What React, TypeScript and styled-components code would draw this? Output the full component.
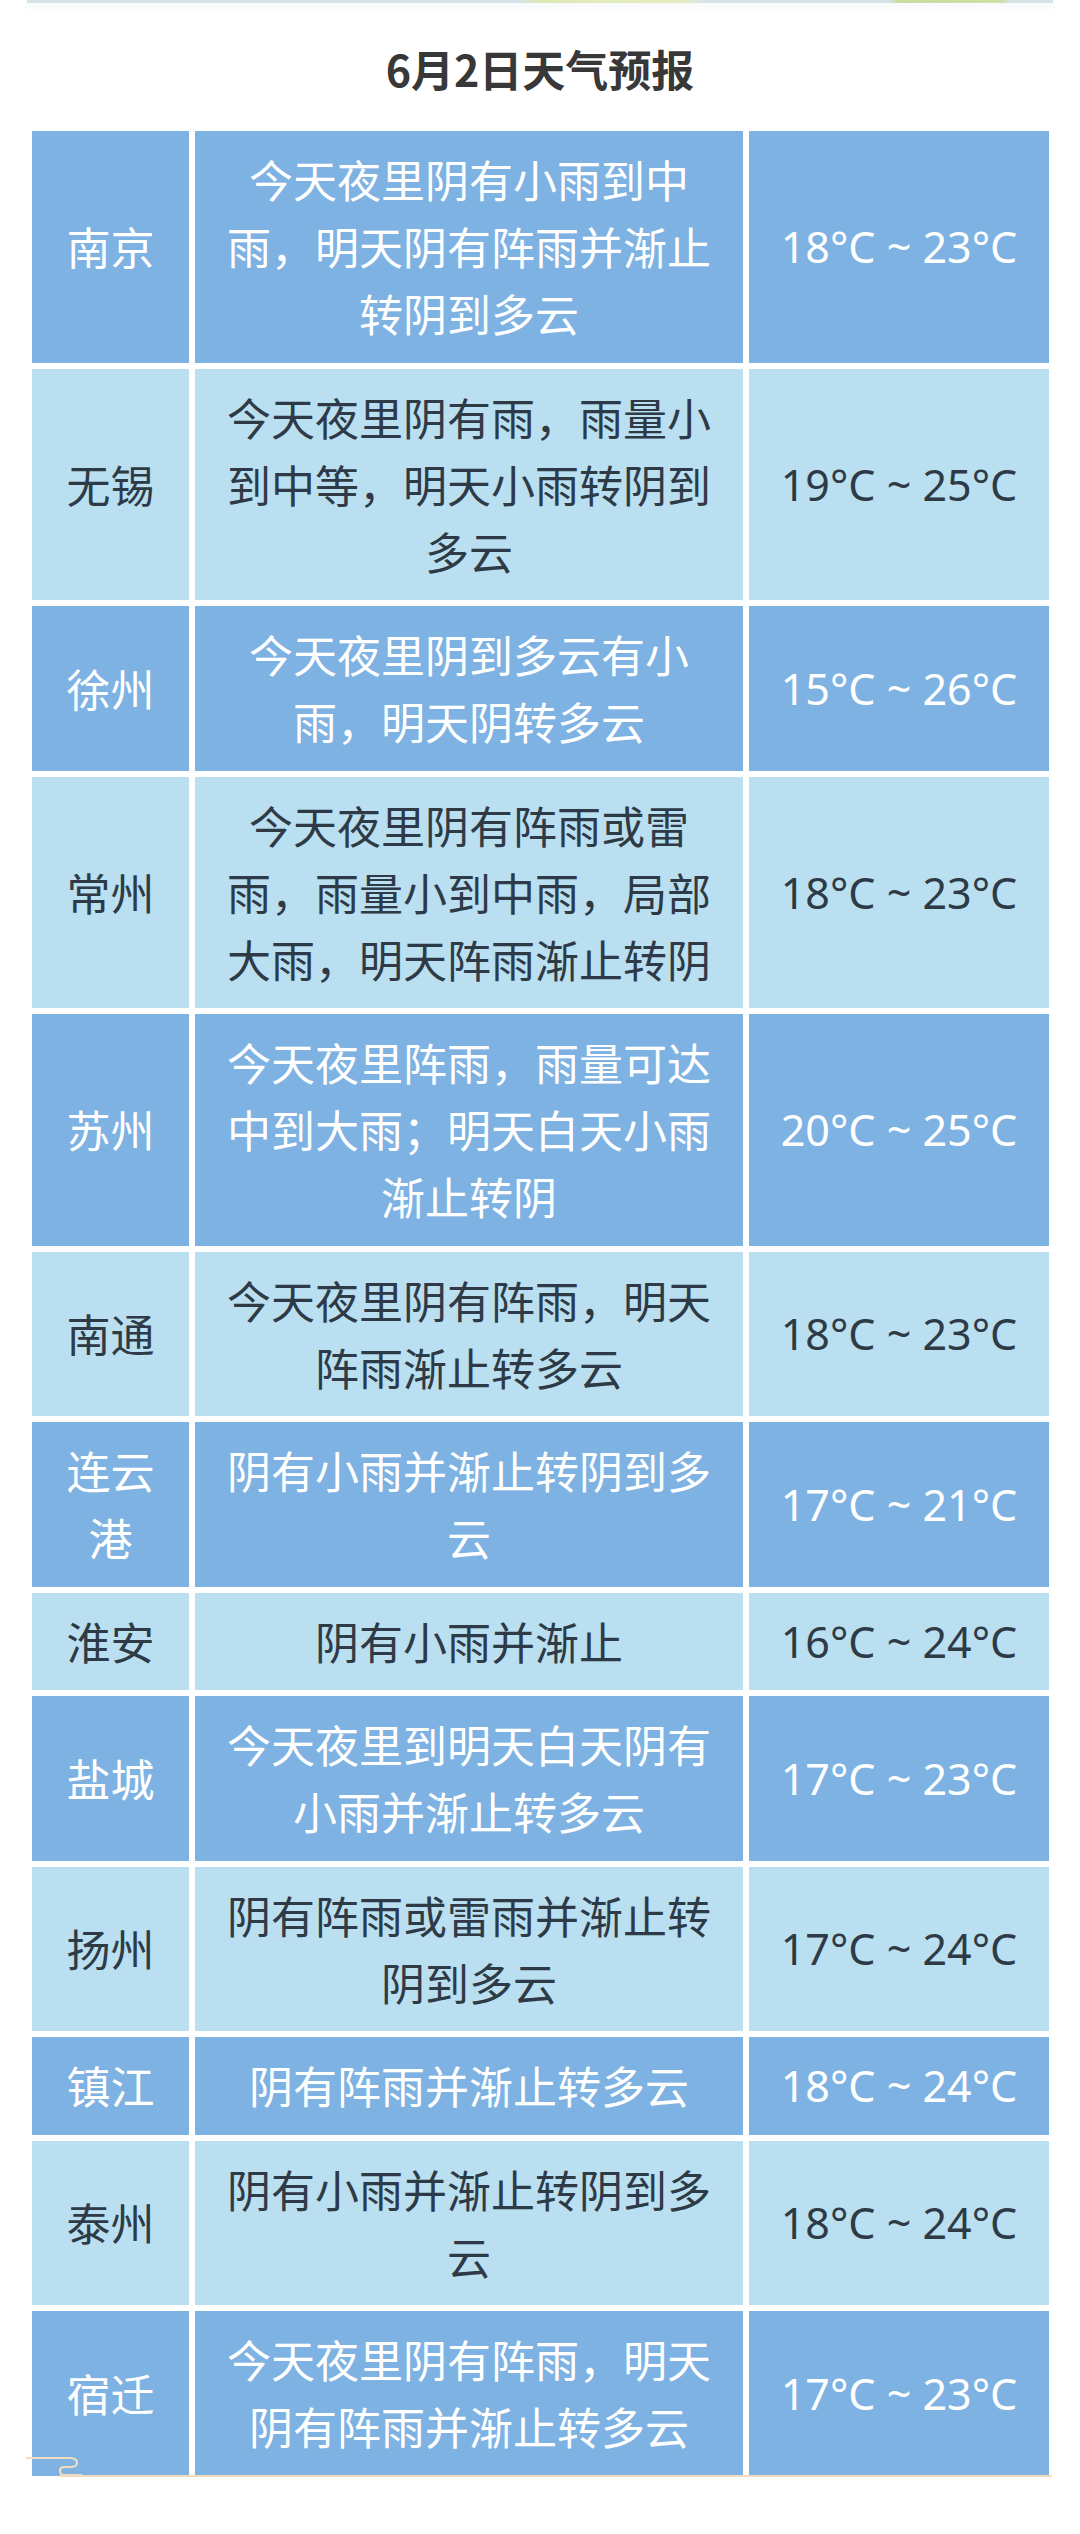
import React from "react";
import styled, { createGlobalStyle } from "styled-components";

const GlobalStyle = createGlobalStyle`
  html, body {
    margin: 0;
    padding: 0;
    background: #fff;
  }
  body {
    font-family: "Noto Sans CJK SC", "Noto Sans", sans-serif;
  }
`;

type Tone = "dark" | "light";

interface Forecast {
  city: string;
  text: string;
  low: number;
  high: number;
}

const forecasts: Forecast[] = [
  { city: "南京", text: "今天夜里阴有小雨到中雨，明天阴有阵雨并渐止转阴到多云", low: 18, high: 23 },
  { city: "无锡", text: "今天夜里阴有雨，雨量小到中等，明天小雨转阴到多云", low: 19, high: 25 },
  { city: "徐州", text: "今天夜里阴到多云有小雨，明天阴转多云", low: 15, high: 26 },
  { city: "常州", text: "今天夜里阴有阵雨或雷雨，雨量小到中雨，局部大雨，明天阵雨渐止转阴", low: 18, high: 23 },
  { city: "苏州", text: "今天夜里阵雨，雨量可达中到大雨；明天白天小雨渐止转阴", low: 20, high: 25 },
  { city: "南通", text: "今天夜里阴有阵雨，明天阵雨渐止转多云", low: 18, high: 23 },
  { city: "连云港", text: "阴有小雨并渐止转阴到多云", low: 17, high: 21 },
  { city: "淮安", text: "阴有小雨并渐止", low: 16, high: 24 },
  { city: "盐城", text: "今天夜里到明天白天阴有小雨并渐止转多云", low: 17, high: 23 },
  { city: "扬州", text: "阴有阵雨或雷雨并渐止转阴到多云", low: 17, high: 24 },
  { city: "镇江", text: "阴有阵雨并渐止转多云", low: 18, high: 24 },
  { city: "泰州", text: "阴有小雨并渐止转阴到多云", low: 18, high: 24 },
  { city: "宿迁", text: "今天夜里阴有阵雨，明天阴有阵雨并渐止转多云", low: 17, high: 23 },
];

const Page = styled.div`
  width: 1080px;
  min-height: 2534px;
  background: #fff;
  overflow: hidden;
`;

// piece of the banner image cut off above the title
const TopStrip = styled.div`
  margin: 0 27px;
  height: 3px;
  background: linear-gradient(
    90deg,
    #d6e4ea 0%,
    #d6e4ea 48%,
    #dfe9b4 50%,
    #e4ecc0 64%,
    #d6e4ea 66%,
    #d6e4ea 84%,
    #c9dc9a 85%,
    #cfe0a4 95%,
    #d6e4ea 96%,
    #d6e4ea 100%
  );
  box-shadow: 0 3px 6px rgba(200, 215, 225, 0.35);
`;

const Title = styled.h1`
  margin: 35px 0 33px;
  height: 60px;
  line-height: 60px;
  text-align: center;
  font-size: 43px;
  font-weight: 700;
  color: #383838;
  letter-spacing: 0;
`;

const TableWrap = styled.div`
  position: relative;
  margin: 0 31px 0 32px;
`;

const Table = styled.div`
  display: grid;
  grid-template-columns: 157px 548px 300px;
  column-gap: 6px;
  row-gap: 6px;
`;

const Cell = styled.div<{ $tone: Tone }>`
  display: flex;
  align-items: center;
  justify-content: center;
  text-align: center;
  padding: 15px 14px 15.5px;
  font-size: 44px;
  line-height: 67px;
  background: ${(p) => (p.$tone === "dark" ? "#7db2e2" : "#b9dff1")};
  color: ${(p) => (p.$tone === "dark" ? "#ffffff" : "#2e3a45")};
`;

const CityCell = styled(Cell)`
  padding-left: 14px;
  padding-right: 14px;
`;

const TextCell = styled(Cell)`
  padding-left: 24px;
  padding-right: 24px;
`;

const TempCell = styled(Cell)`
  font-family: "Noto Sans", "Noto Sans CJK SC", sans-serif;
  font-size: 43px;
  white-space: nowrap;
`;

const BottomLine = styled.div`
  position: absolute;
  left: 28px;
  right: -3px;
  bottom: -1px;
  height: 2px;
  background: #f0dcbc;
`;

const CornerDecor = styled.svg`
  position: absolute;
  left: -6px;
  bottom: -1px;
  width: 56px;
  height: 22px;
`;

function Row({ item, tone }: { item: Forecast; tone: Tone }) {
  return (
    <>
      <CityCell $tone={tone}>{item.city}</CityCell>
      <TextCell $tone={tone}>{item.text}</TextCell>
      <TempCell $tone={tone}>
        {item.low}°C ~ {item.high}°C
      </TempCell>
    </>
  );
}

export default function App() {
  return (
    <Page>
      <GlobalStyle />
      <TopStrip />
      <Title>6月2日天气预报</Title>
      <TableWrap>
        <Table>
          {forecasts.map((f, i) => (
            <Row key={f.city} item={f} tone={i % 2 === 0 ? "dark" : "light"} />
          ))}
        </Table>
        <BottomLine />
        <CornerDecor viewBox="0 0 56 22" fill="none">
          <path
            d="M0 3 H44 Q51 3 51 8 Q51 12 44 12 H38 Q34 12 34 16 Q34 20 38 20 H56"
            stroke="#f0dcbc"
            strokeWidth="2.2"
            strokeLinecap="round"
          />
        </CornerDecor>
      </TableWrap>
    </Page>
  );
}
